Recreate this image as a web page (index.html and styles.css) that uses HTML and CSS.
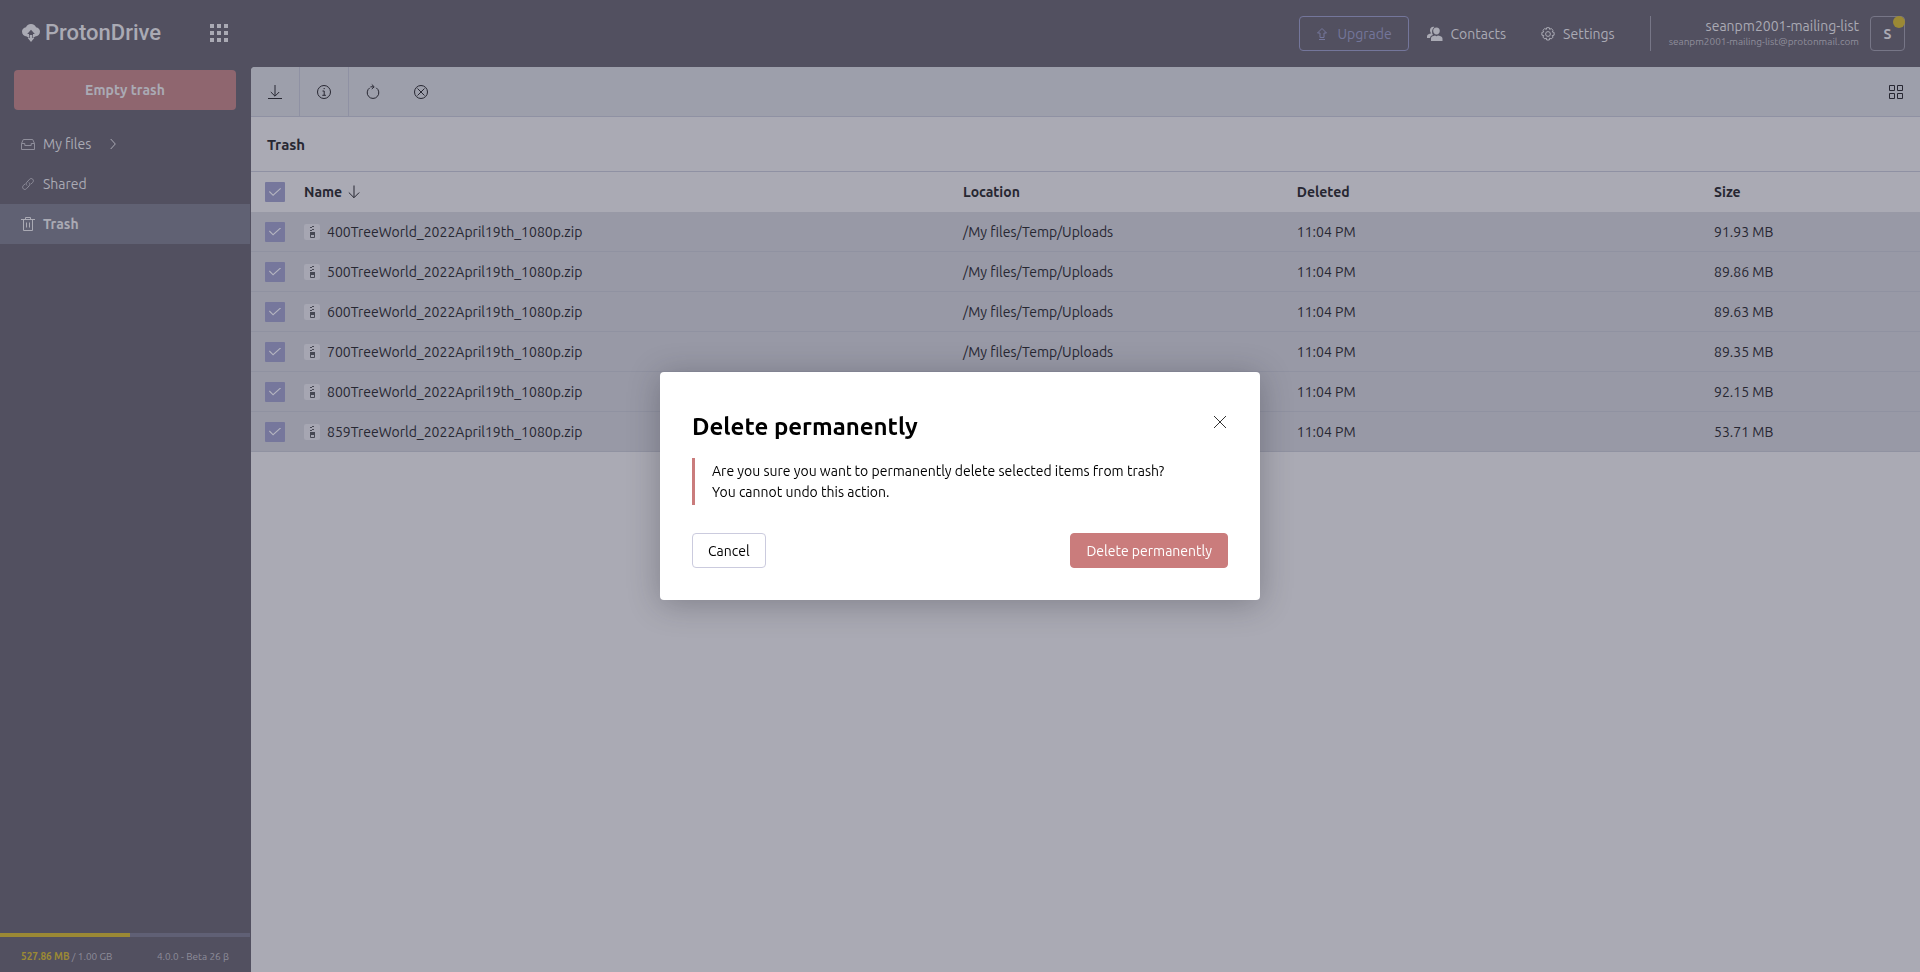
FILE: index.html
```html
<!DOCTYPE html>
<html lang="en">
<head>
<meta charset="utf-8">
<title>Trash - ProtonDrive</title>
<link rel="stylesheet" href="styles.css">
</head>
<body>
<div class="app">
  <header class="header">
    <div class="brand-area">
      <a class="brand" href="#" aria-label="ProtonDrive">
        <svg class="brand-mark" viewBox="0 0 18 18" aria-hidden="true"><path fill="currentColor" d="M9 0C6.400 0 4.600 1.300 4 3.200 1.700 3.500 0 5.200 0 7.500 0 10.200 2 12.300 4.800 12.500L7 14v-4H5.200L9 5.800 12.800 10H11v4l2.200-1.500C16 12.300 18 10.200 18 7.500 18 5.200 16.300 3.500 14 3.200 13.400 1.300 11.600 0 9 0z"/><path fill="currentColor" d="M7.700 11h2.600v3h2L9 18l-3.300-4h2z"/></svg>
        <span class="brand-name">ProtonDrive</span>
      </a>
      <button class="icon-button" type="button" aria-label="Proton apps">
        <svg class="apps-icon" viewBox="0 0 18 18" aria-hidden="true"><path fill="currentColor" d="M0 0h4v4H0zM7 0h4v4H7zM14 0h4v4h-4zM0 7h4v4H0zM7 7h4v4H7zM14 7h4v4h-4zM0 14h4v4H0zM7 14h4v4H7zM14 14h4v4h-4z"/></svg>
      </button>
    </div>
    <nav class="top-nav" aria-label="Account">
      <a class="upgrade" href="#"><svg class="icon" viewBox="0 0 14 14" aria-hidden="true"><path class="line" d="M7 1.500 11.500 6H9v4.500H5V6H2.500zM4 12.500h6"/></svg>Upgrade</a>
      <a class="top-link" href="#"><svg class="icon contacts-icon" viewBox="0 0 16 16" aria-hidden="true"><path fill="currentColor" d="M9.500 1.500c2.200 0 3.300 1.400 3.300 3.300S11.700 8.500 9.500 8.500 6.200 6.700 6.200 4.800s1.100-3.300 3.300-3.300zM4 15v-2.500c0-1.500 1-2.200 2.500-2.500l1.500-.5 1.500.8 1.500-.8 2 .5c1.700.4 2.500 1.200 2.500 2.700V15z"/><path fill="currentColor" d="M7.500 1C5 .4 3 1.700 3 4.300c0 1.300.5 2.300 1.300 3L2 8C.6 8.500 0 9.200 0 10.500V12h3c.2-1.600 1.200-2.400 3-3C4.500 6.500 4.800 3 7.500 1z"/></svg>Contacts</a>
      <a class="top-link" href="#"><svg class="icon" viewBox="0 0 14 14" aria-hidden="true"><path class="line" d="M5.700.7h2.600l.4 1.700 1.500-.9 1.900 1.900-.9 1.500 1.900.5v2.800l-1.900.4.9 1.500-1.900 1.900-1.500-.9-.4 1.900H5.700l-.4-1.900-1.500.9-1.900-1.900.9-1.500-1.900-.4V5.400l1.900-.5-.9-1.500 1.900-1.900 1.500.9z"/><circle class="line" cx="7" cy="7" r="2.400"/></svg>Settings</a>
      <div class="account">
        <div class="account-text"><span class="account-name">seanpm2001-mailing-list</span><span class="account-mail">seanpm2001-mailing-list@protonmail.com</span></div>
        <button class="avatar" type="button" aria-label="Account menu">S<span class="badge"></span></button>
      </div>
    </nav>
  </header>
  <aside class="sidebar">
    <button class="empty-button" type="button">Empty trash</button>
    <nav class="side-nav" aria-label="Folders">
      <a class="side-link" href="#"><svg class="icon dim" viewBox="0 0 14 14" aria-hidden="true"><path class="line" d="M.5 12.500v-6l1.800-4h9.400l1.800 4v6zM.5 6.500h3.300v2h6.400v-2h3.300"/></svg>My files<svg class="chevron" viewBox="0 0 6 12" aria-hidden="true"><path class="line" d="M.7 1 5.300 6 .7 11"/></svg></a>
      <a class="side-link" href="#"><svg class="icon dim" viewBox="0 0 14 14" aria-hidden="true"><path class="line" d="M6 8.500C4.800 7.300 5 6 6 5l2.500-2.700c1-1 2.300-1 3.200-.1s.9 2.200 0 3.200L9.800 7.300M8 5.500C9.200 6.700 9 8 8 9l-2.500 2.700c-1 1-2.300 1-3.200.1s-.9-2.200 0-3.200l1.900-1.900"/></svg>Shared</a>
      <a class="side-link current" href="#" aria-current="page"><svg class="icon" viewBox="0 0 14 14" aria-hidden="true"><path class="line" d="M0 2.500h14M4.500 2.500v-2h5v2M2.500 2.500v11h9v-11M5.500 5.500v5M8.500 5.500v5"/></svg>Trash</a>
    </nav>
    <div class="storage">
      <div class="meter"><div class="meter-fill"></div></div>
      <div class="storage-text"><span><b class="used">527.86 MB</b> / 1.00 GB</span><span>4.0.0 - Beta 26 β</span></div>
    </div>
  </aside>
  <main class="main">
    <div class="toolbar">
      <button class="tool ruled" type="button" aria-label="Download"><svg class="icon" viewBox="0 0 14 14" aria-hidden="true"><path class="line" d="M7 0v11M2.800 7 7 11.200 11.200 7M0 13.500h14"/></svg></button>
      <button class="tool ruled" type="button" aria-label="Details"><svg class="icon" viewBox="0 0 14 14" aria-hidden="true"><circle class="line" cx="7" cy="7" r="6.500"/><path class="line" d="M5.500 6h1.700v4.200M5.300 10.300h3.600M6.600 3.600h1.200"/></svg></button>
      <button class="tool" type="button" aria-label="Restore"><svg class="icon" viewBox="0 0 14 14" aria-hidden="true"><path class="line" d="M3.800 2.800A5.800 5.800 0 1 0 10.200 2.800M4.500 1.800h3M5.800-.5 8.200 1.800 5.800 4"/></svg></button>
      <button class="tool" type="button" aria-label="Delete permanently"><svg class="icon" viewBox="0 0 14 14" aria-hidden="true"><circle class="line" cx="7" cy="7" r="6.500"/><path class="line" d="m3.500 3.500 7 7m0-7-7 7"/></svg></button>
      <button class="tool last" type="button" aria-label="Grid view"><svg class="icon" viewBox="0 0 14 14" aria-hidden="true"><path class="line" d="M.5.500h5v5h-5zM8.500.500h5v5h-5zM.5 8.500h5v5h-5zM8.500 8.500h5v5h-5z"/></svg></button>
    </div>
    <h1 class="page-title">Trash</h1>
    <table class="files">
      <thead><tr><th class="col-check"><input class="check" type="checkbox" aria-label="Select all" checked></th><th><span class="name-cell sort">Name<svg class="sort-icon" viewBox="0 0 12 14" aria-hidden="true"><path class="line" d="M6 .500v12M.8 7.500 6 12.700l5.200-5.200"/></svg></span></th><th class="col-location">Location</th><th class="col-deleted">Deleted</th><th class="col-size">Size</th></tr></thead>
      <tbody id="rows"></tbody>
    </table>
  </main>
</div>
<div class="overlay">
  <section class="modal" role="dialog" aria-modal="true" aria-labelledby="modal-title">
    <div class="modal-head">
      <h2 class="modal-title" id="modal-title">Delete permanently</h2>
      <button class="close" type="button" aria-label="Close"><svg class="close-icon" viewBox="0 0 12 12" aria-hidden="true"><path class="line" d="m0 0 12 12M12 0 0 12"/></svg></button>
    </div>
    <p class="warning">Are you sure you want to permanently delete selected items from trash?<br>You cannot undo this action.</p>
    <div class="modal-actions"><button class="button" type="button">Cancel</button><button class="button danger" type="button">Delete permanently</button></div>
  </section>
</div>
<script src="files.js"></script>
</body>
</html>
```
FILE: files.js
```js
const files = [
  ["400", "91.93 MB"], ["500", "89.86 MB"], ["600", "89.63 MB"],
  ["700", "89.35 MB"], ["800", "92.15 MB"], ["859", "53.71 MB"]
];
const zipIcon = '<svg class="file-icon" viewBox="0 0 16 16" aria-hidden="true"><rect class="file-bg" width="16" height="16" rx="2"/><path class="file-zip" d="M8 2h2v1H8zM6 3h2v1H6zM8 5h2v1H8zM6 6h2v1H6zM6 8h5v3H6z"/><path class="line file-zip-line" d="M6.500 10.500h4v3h-4z"/></svg>';
document.getElementById("rows").innerHTML = files.map(([n, size]) => {
  const name = n + "TreeWorld_2022April19th_1080p.zip";
  return `<tr><td class="col-check"><input class="check" type="checkbox" aria-label="Select ${name}" checked></td><td><span class="name-cell">${zipIcon}${name}</span></td><td>/My files/Temp/Uploads</td><td>11:04 PM</td><td>${size}</td></tr>`;
}).join("");
```
FILE: styles.css
```css
:root {
  --ink: #272732;
  --chrome: #525060;
  --chrome-text: #aaaab4;
  --chrome-dim: #8f8e9b;
  --rule: #8f91a3;
}
* { box-sizing: border-box; }
body {
  margin: 0;
  font: 14px/20px Ubuntu, "Noto Sans", sans-serif;
  color: var(--ink);
  background: var(--chrome);
}
button { font: inherit; color: inherit; border: 0; background: none; padding: 0; cursor: pointer; }
a { color: inherit; text-decoration: none; }
svg { display: block; flex: none; overflow: visible; }
.line { fill: none; stroke: currentColor; stroke-width: 1; }
.icon { width: 14px; height: 14px; }

.app {
  display: grid;
  grid-template: 67px 1fr / 251px 1fr;
  min-height: 100vh;
}
.header { grid-column: 1 / -1; display: flex; justify-content: space-between; color: var(--chrome-text); }
.brand-area { width: 251px; display: flex; align-items: center; justify-content: space-between; padding: 0 23px 2px 22px; }
.brand { display: flex; align-items: center; gap: 5px; }
.brand-mark { width: 18px; height: 18px; }
.brand-name { font: 500 22px/28px Roboto, "Noto Sans", sans-serif; }
.apps-icon { width: 18px; height: 18px; }
.top-nav { display: flex; align-items: center; padding-right: 15px; }
.upgrade {
  display: flex; align-items: center; justify-content: center; gap: 8px;
  width: 110px; height: 35px; margin-right: 18px;
  border: 1px solid #74769b; border-radius: 4px; color: #74769b;
}
.top-link { display: flex; align-items: center; gap: 8px; margin-right: 35px; }
.contacts-icon { width: 16px; height: 16px; }
.account { display: flex; align-items: center; gap: 11px; height: 35px; border-left: 1px solid #777687; padding-left: 18px; }
.account-text { display: flex; flex-direction: column; align-items: flex-end; padding-bottom: 2px; }
.account-name { line-height: 18px; }
.account-mail { font-size: 10px; line-height: 14px; color: var(--chrome-dim); }
.avatar { position: relative; width: 35px; height: 35px; border: 1px solid #777687; border-radius: 4px; font-weight: 700; }
.badge { position: absolute; top: -1px; right: -1px; width: 12px; height: 12px; border-radius: 50%; background: #9b8935; }

.sidebar { display: flex; flex-direction: column; color: var(--chrome-text); padding: 3px 1px 0 0; }
.empty-button { height: 40px; margin: 0 14px; border-radius: 4px; background: #8f666f; font-weight: 700; }
.side-nav { margin-top: 14px; }
.side-link { display: flex; align-items: center; gap: 8px; height: 40px; padding: 0 21px; }
.current { background: #606173; font-weight: 700; }
.dim { color: var(--chrome-dim); }
.chevron { width: 6px; height: 12px; margin-left: 11px; color: var(--chrome-text); }
.storage { margin-top: auto; font-size: 10px; color: var(--chrome-dim); }
.meter { height: 4px; background: #606075; }
.meter-fill { width: 52%; height: 100%; background: #9b8935; }
.storage-text { display: flex; justify-content: space-between; align-items: center; height: 35px; padding: 4px 21px 0; line-height: 16px; }
.used { color: #9b8935; }

.main { min-width: 0; background: #aaaab4; border-top-left-radius: 4px; overflow: hidden; }
.toolbar { display: flex; height: 50px; background: #9d9fab; border-bottom: 1px solid var(--rule); }
.tool { width: 48px; display: grid; place-items: center; }
.ruled { width: 49px; border-right: 1px solid var(--rule); }
.last { margin-left: auto; }
.page-title { margin: 0; padding: 18px 16px 16px; border-bottom: 1px solid var(--rule); font-size: 15px; line-height: 20px; }
.files { width: 100%; table-layout: fixed; border-spacing: 0; text-align: left; }
th, td { height: 40px; padding: 0 11px; white-space: nowrap; }
tbody td { background: #9899a6; border-bottom: 1px solid #9092a1; }
th.col-check, td.col-check { width: 42px; padding: 0 0 0 14px; }
.col-location { width: 20%; }
.col-deleted { width: 25%; }
.col-size { width: 13%; }
.check {
  appearance: none; display: grid; place-items: center;
  width: 20px; height: 20px; margin: 0; background: #76779c; border-radius: 1px;
}
.check::before {
  content: ""; width: 12px; height: 8px; background: #b5b5c0;
  clip-path: polygon(0 50%, 6% 38%, 34% 82%, 94% 0, 100% 8%, 34% 100%);
}
.name-cell { display: flex; align-items: center; gap: 7px; }
.sort { gap: 6px; }
.sort-icon { width: 12px; height: 14px; }
.file-icon { width: 16px; height: 16px; }
.file-bg { fill: #a6a6b2; }
.file-zip { fill: #474853; }
.file-zip-line { color: #474853; }

.overlay { position: fixed; inset: 0; display: grid; place-items: center; }
.modal {
  width: min(600px, 100%); padding: 32px; color: #000; background: #fff; border-radius: 4px;
  box-shadow: 0 4px 32px rgb(30 30 40 / 30%);
}
.modal-head { display: flex; justify-content: space-between; align-items: flex-start; }
.modal-title { margin: 7px 0 15px; font-size: 24px; line-height: 32px; }
.close { width: 16px; height: 16px; margin-top: 10px; display: grid; place-items: center; color: #333; }
.close-icon { width: 12px; height: 12px; }
.warning { margin: 0 0 28px; padding: 3px 17px 2px; border-left: 3px solid #ca7c7c; line-height: 21px; }
.modal-actions { display: flex; justify-content: space-between; }
.button { height: 35px; padding: 0 15px; border: 1px solid #cbcbde; border-radius: 4px; }
.danger { color: #fff; background: #ca7c7c; border-color: #ca7c7c; }
```
